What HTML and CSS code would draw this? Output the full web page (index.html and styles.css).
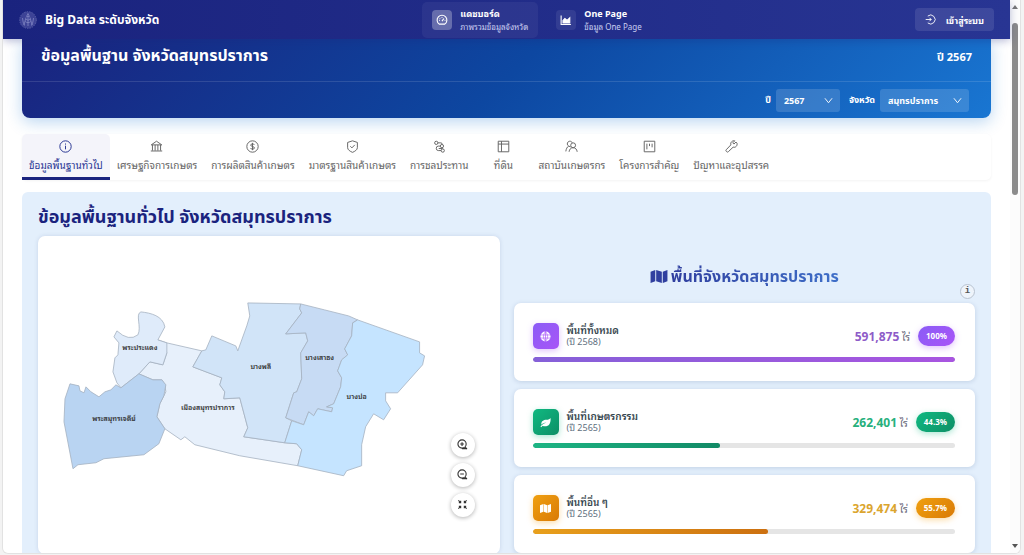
FILE: index.html
```html
<!DOCTYPE html>
<html lang="th">
<head>
  <meta charset="UTF-8">
  <meta name="viewport" content="width=device-width, initial-scale=1.0">
  <title>Big Data ระดับจังหวัด</title>
  <link rel="stylesheet" href="styles.css">
</head>
<body>
  <div class="window">
    <div class="page">
      <header class="topbar">
        <div class="brand">
          <svg class="emblem" viewBox="0 0 18 18">
            <circle cx="9" cy="9" r="8.3" fill="#3d4396" stroke="#5a60a8" stroke-dasharray="1.5 1"/>
            <path d="M9 2.5L7.6 5.5h2.8zM7 6.5L5 14M11 6.5L13 14M7 8c1 1.5 3 1.5 4 0M6.3 10.5c1.5 1.5 4 1.5 5.4 0M9 6v9M3.5 7c.5 3 .5 5 2 7.5M14.5 7c-.5 3-.5 5-2 7.5" fill="none" stroke="#8388c4" stroke-width=".8"/>
          </svg>
          <h1>Big Data ระดับจังหวัด</h1>
        </div>
        <nav class="main-nav">
          <a href="#" class="nav-item active">
            <span class="nav-icon">
              <svg viewBox="0 0 16 16"><path d="M4.3 13.5a6.5 6.5 0 1 1 7.4 0z"/><path d="M8 9.5l2.5-3.5M4 8.5h1M11.5 8.5h1M8 4v1M5 5.5l.6.6"/></svg>
            </span>
            <span class="nav-text"><b>แดชบอร์ด</b><small>ภาพรวมข้อมูลจังหวัด</small></span>
          </a>
          <a href="#" class="nav-item">
            <span class="nav-icon">
              <svg viewBox="0 0 16 16"><path d="M1.5 2v12h13"/><path d="M4 12V8.5L6.5 6l3 2.5L13 5v7z" fill="#fff"/></svg>
            </span>
            <span class="nav-text"><b>One Page</b><small>ข้อมูล One Page</small></span>
          </a>
        </nav>
        <button class="login">
          <svg viewBox="0 0 16 16"><path d="M4 3a6.5 6.5 0 1 1 0 10M1 8h8M6.5 5.5L9 8l-2.5 2.5"/></svg>
          เข้าสู่ระบบ
        </button>
      </header>

      <main>
        <section class="hero">
          <div class="hero-title">
            <h2>ข้อมูลพื้นฐาน จังหวัดสมุทรปราการ</h2>
            <span>ปี 2567</span>
          </div>
          <div class="filters">
            <label for="year">ปี</label>
            <span class="picker year">
              <select id="year"><option>2567</option></select>
              <svg viewBox="0 0 10 10"><path d="M1 2.5l4 5 4-5"/></svg>
            </span>
            <label for="province">จังหวัด</label>
            <span class="picker province">
              <select id="province"><option>สมุทรปราการ</option></select>
              <svg viewBox="0 0 10 10"><path d="M1 2.5l4 5 4-5"/></svg>
            </span>
          </div>
        </section>

        <nav class="tabs">
          <a href="#" class="tab active">
            <svg viewBox="0 0 16 16"><circle cx="8" cy="8" r="7"/><path d="M8 7v4.5M8 4.3v1.4"/></svg>
            ข้อมูลพื้นฐานทั่วไป
          </a>
          <a href="#" class="tab">
            <svg viewBox="0 0 16 16"><path d="M1.5 6L8 1.5 14.5 6zM3 6v7M6.3 6v7M9.7 6v7M13 6v7M1 13.5h14"/></svg>
            เศรษฐกิจการเกษตร
          </a>
          <a href="#" class="tab">
            <svg viewBox="0 0 16 16"><circle cx="8" cy="8" r="7"/><path d="M10.3 6C10 4.3 5.8 4.3 5.8 6.3c0 2.2 4.6 1.2 4.6 3.5 0 2-4.5 2-4.8.1M8 3.5v9"/></svg>
            การผลิตสินค้าเกษตร
          </a>
          <a href="#" class="tab">
            <svg viewBox="0 0 16 16"><path d="M8 1l6 2v6.5c0 2.5-3 4.5-6 5.7-3-1.2-6-3.2-6-5.7V3zM5.3 7.7l2 2 3.5-3.7"/></svg>
            มาตรฐานสินค้าเกษตร
          </a>
          <a href="#" class="tab">
            <svg viewBox="0 0 16 16"><circle cx="4" cy="3.5" r="2"/><circle cx="11" cy="7.5" r="2"/><circle cx="12" cy="13" r="2"/><path d="M6 3.5h3.5q2 0 1.8 2M9 7.5H6.5q-2.5 0-2.5 2.7T6.5 13H10M7 10.5h5"/></svg>
            การชลประทาน
          </a>
          <a href="#" class="tab">
            <svg viewBox="0 0 16 16"><path d="M1.5 1.5h13v13h-13zM5.5 1.5v13M1.5 5h13"/></svg>
            ที่ดิน
          </a>
          <a href="#" class="tab">
            <svg viewBox="0 0 16 16"><path d="M4.5 7.5A3.2 3.2 0 1 1 9 3.5M4.5 7.5C2.5 8.5 1.5 11 1 14M4.5 7.5L7 8.5"/><circle cx="10" cy="6.5" r="3"/><path d="M5 14.5c.5-3 2-5 5-5s4.5 2 5 5"/></svg>
            สถาบันเกษตรกร
          </a>
          <a href="#" class="tab">
            <svg viewBox="0 0 16 16"><path d="M1.5 1.5h13v13h-13zM4.8 4.5v7M8 4.5v3M11.2 4.5v4.5"/></svg>
            โครงการสำคัญ
          </a>
          <a href="#" class="tab">
            <svg viewBox="0 0 16 16"><path d="M13.5 2.5L11 5 9.5 3.5 12 1C9 .3 6.3 3 7.2 6L1.5 12q-1 1 .3 2.2 1.2 1.3 2.3.2L10 8.8c3 1 5.5-1.8 4.8-4.8z"/></svg>
            ปัญหาและอุปสรรค
          </a>
        </nav>

        <section class="overview">
          <h2>ข้อมูลพื้นฐานทั่วไป จังหวัดสมุทรปราการ</h2>
          <div class="columns">
            <div class="map-card">
              <svg class="map" viewBox="38 235 462 318">
                <g stroke="#a4b1c0" stroke-width=".8" stroke-linejoin="round">
                  <path fill="#e7f0fb" d="M158 339L167 342 202 350 193 366 222 377 220 384 225 391 224 398 240 397 248 427 244 436 285 442 297 443 302 449 298 465 240 455 195 444 185 436 181 439 165 428 157 416 160 403 166 391 165 384 162 379 153 379 139 373 150 361 163 364 167 352z"/>
                  <path fill="#dfebfa" d="M158 339L167 342 167 352 163 364 150 361 139 373 121 387 117 382 113 371 115 357 118 354 119 342 114 336 117 330Q129 341 138 334C142 326 135 313 141 311 151 312 163 315 165 326z"/>
                  <path fill="#b9d4f2" d="M139 373L153 379 162 379 166 384 164 395 160 403 157 416 165 428 159 443 144 454 104 458 96 462 78 464 73 468 64 421 65 398 70 383 79 385 80 390 84 392 86 386 91 391 99 396 105 391 111 389 116 384 121 387z"/>
                  <path fill="#d1e4f8" d="M202 350L206 349 212 335 236 345 238 350 247 325 250 315 248 302 301 303 300 308 302 312 286 333 306 332 308 340 301 352 302 378 297 391 294 392 286 417 292 420 285 442 244 436 248 427 240 397 224 398 225 391 220 384 222 377 193 366z"/>
                  <path fill="#c7dbf4" d="M301 303L325 309 349 315 358 319 353 322 352 335 345 348 348 354 342 359 338 370 342 377 341 386 334 403 327 406 333 407 332 411 318 408 314 415 309 411 304 424 286 417 294 392 297 391 302 378 301 352 308 340 306 332 286 333 302 312 300 308z"/>
                  <path fill="#c5e4ff" d="M358 319L420 341 420 352 425 355 423 364 398 392 386 392 386 400 391 408 384 419 374 413 366 426 362 444 362 465 347 470 344 475 298 465 302 449 297 443 285 442 292 420 304 424 309 411 314 415 318 408 332 411 333 407 327 406 334 403 341 386 342 377 338 370 342 359 348 354 345 348 352 335 353 322z"/>
                </g>
                <g class="map-labels">
                  <text x="140" y="349">พระประแดง</text>
                  <text x="114" y="420">พระสมุทรเจดีย์</text>
                  <text x="208" y="409">เมืองสมุทรปราการ</text>
                  <text x="261" y="368">บางพลี</text>
                  <text x="320" y="359">บางเสาธง</text>
                  <text x="357" y="398">บางบ่อ</text>
                </g>
              </svg>
              <div class="map-tools">
                <button aria-label="ขยาย"><svg viewBox="0 0 12 12"><circle cx="5.5" cy="5.5" r="4.5"/><path d="M3.5 5.5h4M5.5 3.5v4M9 9l2 2M5.5 10.5H11"/></svg></button>
                <button aria-label="ย่อ"><svg viewBox="0 0 12 12"><circle cx="5.5" cy="5.5" r="4.5"/><path d="M3.5 5.5h4M9 9l2 2M5.5 10.5H11"/></svg></button>
                <button aria-label="เต็มจอ"><svg viewBox="0 0 12 12"><path d="M1.5 1.5L4 4M4 2v2H2M10.5 1.5L8 4M8 2v2h2M1.5 10.5L4 8M4 10V8H2M10.5 10.5L8 8M8 10V8h2"/></svg></button>
              </div>
            </div>

            <div class="stats">
              <h3>
                <svg viewBox="0 0 18 16"><path d="M0 3l5-2v12l-5 2zM6 1l6 2v12l-6-2zM13 3l5-2v12l-5 2z"/></svg>
                <span>พื้นที่จังหวัดสมุทรปราการ</span>
              </h3>
              <button class="info" aria-label="ข้อมูลเพิ่มเติม">i</button>

              <article class="stat purple">
                <div class="stat-row">
                  <span class="stat-icon"><svg viewBox="0 0 12 12"><circle cx="6" cy="6" r="5.5" fill="#fff"/><path d="M.5 4.3h11M.5 7.7h11M6 .5v11M6 .5Q1.5 6 6 11.5M6 .5q4.5 5.5 0 11" fill="none" stroke="#a855f7" stroke-width=".7"/></svg></span>
                  <div class="stat-name"><b>พื้นที่ทั้งหมด</b><small>(ปี 2568)</small></div>
                  <div class="stat-value"><b>591,875</b> ไร่</div>
                  <span class="badge">100%</span>
                </div>
                <div class="bar"><div class="fill" style="width: 100%"></div></div>
              </article>

              <article class="stat green">
                <div class="stat-row">
                  <span class="stat-icon"><svg viewBox="0 0 12 12"><path d="M11.5 1C12 7 9.5 10.5 5 10.2 3.5 10 3 9.5 3 9.5L1.2 11.3.5 10.5C2 8.5 4 7 7 6.3 4.5 6.3 3 7 1.5 8.5 1 4.5 4 3 7 3c2.5 0 3.5-.8 4.5-2z" fill="#fff"/></svg></span>
                  <div class="stat-name"><b>พื้นที่เกษตรกรรม</b><small>(ปี 2565)</small></div>
                  <div class="stat-value"><b>262,401</b> ไร่</div>
                  <span class="badge">44.3%</span>
                </div>
                <div class="bar"><div class="fill" style="width: 44.3%"></div></div>
              </article>

              <article class="stat orange">
                <div class="stat-row">
                  <span class="stat-icon"><svg viewBox="0 0 12 12"><path d="M0 2.5L3.7 1v8.5L0 11zM4.2 1l3.6 1.5V11L4.2 9.5zM8.3 2.5L12 1v8.5L8.3 11z" fill="#fff"/></svg></span>
                  <div class="stat-name"><b>พื้นที่อื่น ๆ</b><small>(ปี 2565)</small></div>
                  <div class="stat-value"><b>329,474</b> ไร่</div>
                  <span class="badge">55.7%</span>
                </div>
                <div class="bar"><div class="fill" style="width: 55.7%"></div></div>
              </article>
            </div>
          </div>
        </section>
      </main>
    </div>
    <div class="scrollbar">
      <span class="arrow up"></span>
      <span class="thumb"></span>
      <span class="arrow down"></span>
    </div>
  </div>
</body>
</html>
```
FILE: styles.css
```css
* {
  margin: 0;
  padding: 0;
  box-sizing: border-box;
}
body {
  font-family: "Noto Sans", "Noto Sans Thai Looped", "Noto Sans Thai", "Open Sans", sans-serif;
  font-size: 10px;
  background: #f3f3f3;
  color: #333;
  height: 100vh;
  padding: 0 3px 1px 2px;
  overflow: hidden;
}
a { text-decoration: none; color: inherit; }
button, select { font: inherit; color: inherit; border: none; }
svg { fill: none; stroke: currentColor; flex: none; }
h1, h2, h3, .filters, .hero-title {
  font-family: "Noto Sans", "Noto Sans Thai", sans-serif;
  white-space: nowrap;
}
h1, h2, h3 { line-height: 24px; }

.window {
  display: flex;
  height: 100%;
  background: #fff;
  border: 1px solid #e2e2e2;
  border-top: none;
  border-radius: 0 0 6px 6px;
  overflow: hidden;
}
.page { flex: 1; min-width: 0; }

/* top bar */
.topbar {
  position: relative;
  display: flex;
  align-items: center;
  justify-content: space-between;
  height: 39px;
  padding: 0 16px;
  background: linear-gradient(90deg, #1a237e, #283593);
  color: #fff;
  box-shadow: 0 2px 8px rgba(26, 35, 126, 0.3);
  z-index: 2;
}
.brand { display: flex; align-items: center; gap: 8px; }
.brand h1 { font-size: 12px; line-height: 20px; }
.emblem { width: 18px; height: 18px; }
.main-nav { display: flex; gap: 8px; }
.nav-item {
  display: flex;
  align-items: center;
  gap: 8px;
  height: 36px;
  padding: 0 10px;
  border-radius: 5px;
}
.nav-item.active { background: rgba(255, 255, 255, 0.05); }
.nav-icon {
  display: flex;
  align-items: center;
  justify-content: center;
  width: 20px;
  height: 20px;
  border-radius: 4px;
  background: rgba(255, 255, 255, 0.08);
}
.active .nav-icon { background: rgba(255, 255, 255, 0.28); }
.nav-icon svg { width: 12px; height: 12px; stroke-width: 1.5; }
.nav-text { display: flex; flex-direction: column; line-height: 13px; white-space: nowrap; }
.nav-text b { font-size: 9px; }
.nav-text small { font-size: 8px; color: #c9cdf0; }
.login {
  display: flex;
  align-items: center;
  gap: 10px;
  height: 23px;
  padding: 0 10px;
  border-radius: 4px;
  background: rgba(255, 255, 255, 0.1);
  font-size: 9px;
  font-weight: bold;
}
.login svg { width: 11px; height: 11px; stroke-width: 1.3; }

main { padding: 0 19px; }

/* blue banner */
.hero {
  color: #fff;
  background: linear-gradient(135deg, #1a237e 0%, #0d47a1 50%, #1976d2 100%);
  border-radius: 0 0 8px 8px;
  box-shadow: 0 4px 16px rgba(25, 118, 210, 0.3);
}
.hero-title {
  display: flex;
  justify-content: space-between;
  align-items: center;
  height: 43px;
  padding: 0 19px 10px;
  border-bottom: 1px solid rgba(255, 255, 255, 0.12);
}
.hero-title h2 { font-size: 16px; }
.hero-title span { font-size: 11px; font-weight: bold; padding-top: 4px; }
.filters {
  display: flex;
  align-items: center;
  justify-content: flex-end;
  gap: 5px;
  height: 36px;
  padding: 0 22px;
  font-size: 9px;
  font-weight: bold;
}
.picker { position: relative; color: #fff; }
.picker.year { width: 64px; margin-right: 4px; }
.picker.province { width: 89px; }
.picker select {
  appearance: none;
  width: 100%;
  height: 23px;
  padding: 0 8px;
  border-radius: 3px;
  background: rgba(255, 255, 255, 0.15);
}
.picker svg { position: absolute; right: 7px; top: 7px; width: 9px; height: 9px; pointer-events: none; }

/* tabs */
.tabs {
  display: flex;
  height: 46px;
  margin: 16px 0 12px;
  background: #fff;
  border-radius: 5px;
  box-shadow: 0 1px 3px rgba(0, 0, 0, 0.05);
}
.tab {
  display: flex;
  flex-direction: column;
  align-items: center;
  gap: 2px;
  min-width: 56px;
  padding: 6px 7px 0;
  line-height: 20px;
  font-size: 10px;
  color: #666;
  white-space: nowrap;
  border-bottom: 3px solid transparent;
}
.tab svg { width: 13px; height: 13px; stroke-width: 1.2; }
.tab.active {
  color: #283593;
  background: #f4f4fa;
  border-bottom-color: #1a237e;
  border-radius: 5px 5px 0 0;
}

/* overview */
.overview {
  padding: 12px 16px 2px;
  background: #e3effc;
  border-radius: 6px 6px 0 0;
}
.overview h2 { font-size: 18px; color: #1a237e; }
.columns { display: grid; grid-template-columns: 1fr 1fr; gap: 14px; margin-top: 8px; }
.map-card {
  position: relative;
  background: #fff;
  border-radius: 7px;
  box-shadow: 0 0 4px rgba(40, 70, 120, 0.15);
}
.map { display: block; width: 100%; }
.map-labels {
  font-size: 7px;
  font-weight: 600;
  text-anchor: middle;
  fill: #333;
  stroke: none;
}
.map-tools {
  position: absolute;
  right: 25px;
  bottom: 37px;
  display: flex;
  flex-direction: column;
  gap: 6px;
}
.map-tools button {
  display: flex;
  align-items: center;
  justify-content: center;
  width: 24px;
  height: 24px;
  border-radius: 50%;
  background: #fff;
  box-shadow: 0 1px 4px rgba(0, 0, 0, 0.3);
}
.map-tools svg { width: 11px; height: 11px; stroke-width: 1.2; }

/* area figures */
.stats { display: flex; flex-direction: column; gap: 8px; }
.stats h3 {
  display: flex;
  align-items: center;
  justify-content: center;
  gap: 3px;
  padding-top: 28px;
  font-size: 16px;
  color: #303f9f;
}
.stats h3 span {
  background: linear-gradient(90deg, #303f9f, #3f6fc8);
  background-clip: text;
  color: transparent;
}
.stats h3 svg { width: 18px; height: 15px; fill: currentColor; stroke: none; }
.info {
  align-self: flex-end;
  width: 15px;
  height: 15px;
  margin: -12px 0 -4px;
  border: 1px solid #b9c3d0;
  border-radius: 50%;
  background: #eef4fb;
  color: #555;
  font: bold 9px/13px "Liberation Mono", monospace;
}
.stat {
  height: 78px;
  padding: 19px 20px 0 19px;
  background: #fff;
  border-radius: 7px;
  box-shadow: 0 1px 5px rgba(40, 70, 120, 0.18);
}
.stat-row { display: flex; align-items: center; height: 28px; }
.stat-icon {
  display: flex;
  align-items: center;
  justify-content: center;
  width: 26px;
  height: 26px;
  margin-right: 8px;
  border-radius: 5px;
  background: var(--grad);
  box-shadow: 0 2px 6px var(--glow);
}
.stat-icon svg { width: 11px; height: 11px; stroke: none; }
.stat-name { display: flex; flex-direction: column; flex: 1; line-height: 12px; color: #37474f; white-space: nowrap; }
.stat-name b { font-size: 10px; font-weight: 600; }
.stat-name small { font-size: 9px; color: #607080; }
.stat-value { font-size: 10px; color: #667; }
.stat-value b { font-size: 12px; color: var(--color); }
.badge {
  margin-left: 8px;
  padding: 0 8px;
  line-height: 20px;
  border-radius: 10px;
  background: var(--grad);
  box-shadow: 0 2px 6px var(--glow);
  color: #fff;
  font-size: 8px;
  font-weight: bold;
}
.bar { height: 5px; margin-top: 7px; border-radius: 3px; background: #e5e5e5; overflow: hidden; }
.fill { height: 100%; border-radius: 3px; background: var(--bar); }

.purple {
  --color: #8e5cc8;
  --glow: rgba(168, 85, 247, 0.35);
  --grad: linear-gradient(135deg, #8b5cf6, #a855f7);
  --bar: linear-gradient(90deg, #8560d8, #a855e0);
}
.green {
  --color: #26b07c;
  --glow: rgba(16, 185, 129, 0.35);
  --grad: linear-gradient(135deg, #10b981, #0d8f66);
  --bar: linear-gradient(90deg, #1db584, #128a66);
}
.orange {
  --color: #dba52e;
  --glow: rgba(245, 158, 11, 0.35);
  --grad: linear-gradient(135deg, #f0a010, #d97a06);
  --bar: linear-gradient(90deg, #e8a01c, #cc7010);
}

/* scrollbar */
.scrollbar {
  display: flex;
  flex-direction: column;
  align-items: center;
  width: 10px;
  padding: 5px 0;
  background: #fcfcfc;
}
.thumb { width: 6px; height: 172px; margin: 14px 0 auto; border-radius: 3px; background: #8b8b8b; }
.arrow { border: 3px solid transparent; }
.arrow.up { border-top: none; border-bottom: 4px solid #777; }
.arrow.down { border-bottom: none; border-top: 4px solid #555; }
```
